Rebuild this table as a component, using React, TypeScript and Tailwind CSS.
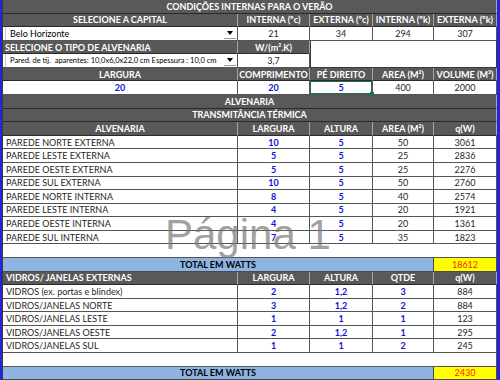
import React from 'react';

const GRID = 'grid grid-cols-[235px_72px_63px_61px_63px] flex-1 min-h-0';
const HEAD =
  'bg-[#595959] text-white font-bold border-r border-b border-r-[#a6a6a6] border-b-[#2a2a2a] flex items-center justify-center whitespace-nowrap overflow-hidden';
const CELL = 'bg-white border-r border-b border-[#555555] flex items-center justify-center whitespace-nowrap overflow-hidden';
const BLUE = 'text-[#1010d8] font-bold';
const DARK = 'text-[#1f1f1f]';

const paredes = [
  ['PAREDE NORTE EXTERNA', '10', '5', '50', '3061'],
  ['PAREDE LESTE EXTERNA', '5', '5', '25', '2836'],
  ['PAREDE OESTE EXTERNA', '5', '5', '25', '2276'],
  ['PAREDE SUL EXTERNA', '10', '5', '50', '2760'],
  ['PAREDE NORTE INTERNA', '8', '5', '40', '2574'],
  ['PAREDE LESTE INTERNA', '4', '5', '20', '1921'],
  ['PAREDE OESTE INTERNA', '4', '5', '20', '1361'],
  ['PAREDE SUL INTERNA', '7', '5', '35', '1823'],
];

const vidros = [
  ['VIDROS (ex. portas e blindex)', '2', '1,2', '3', '884'],
  ['VIDROS/JANELAS NORTE', '3', '1,2', '2', '884'],
  ['VIDROS/JANELAS LESTE', '1', '1', '1', '123'],
  ['VIDROS/JANELAS OESTE', '2', '1,2', '1', '295'],
  ['VIDROS/JANELAS SUL', '1', '1', '2', '245'],
];

function Arrow() {
  return (
    <span className="w-[12px] h-[11px] mr-[1px] shrink-0 flex items-center justify-center border-b border-[#9a9a9a] bg-white">
      <span className="w-0 h-0 border-l-[3px] border-r-[3px] border-t-[4px] border-l-transparent border-r-transparent border-t-black" />
    </span>
  );
}

function Total({ value }: { value: string }) {
  return (
    <div className={GRID}>
      <div className="col-span-4 bg-[#8db4e2] border-r border-b border-[#4a4a4a] flex items-center justify-center font-bold text-black">
        TOTAL EM WATTS
      </div>
      <div className="bg-[#ffff00] border-r border-b border-[#4a4a4a] flex items-center justify-center text-[#ff1a1a]">
        {value}
      </div>
    </div>
  );
}

function DataRow({ row, blueCols }: { row: string[]; blueCols: number[] }) {
  return (
    <div className={GRID}>
      <div className={`${CELL} justify-start pl-[3px] ${DARK}`}>{row[0]}</div>
      {row.slice(1).map((v, i) => (
        <div key={i} className={`${CELL} ${blueCols.includes(i + 1) ? BLUE : DARK}`}>
          {v}
        </div>
      ))}
    </div>
  );
}

export default function App() {
  return (
    <div className="w-[500px] h-[380px] bg-[#2424d8] pl-[2px] pr-[3px] font-['Lato',sans-serif] text-[9px] leading-none">
      <div className="relative h-full flex flex-col border-l border-[#3a3a3a] bg-white">
        <div className={GRID}>
          <div className={`${HEAD} col-span-5 bg-[#555555]`}>CONDIÇÕES INTERNAS PARA O VERÃO</div>
        </div>

        <div className={GRID}>
          <div className={HEAD}>SELECIONE A CAPITAL</div>
          <div className={HEAD}>INTERNA (ºc)</div>
          <div className={HEAD}>EXTERNA (ºc)</div>
          <div className={HEAD}>INTERNA (ºk)</div>
          <div className={HEAD}>EXTERNA (ºk)</div>
        </div>

        <div className={GRID}>
          <div className={`${CELL} justify-between pl-[2px]`}>
            <span className="h-full flex-1 flex items-center pl-[4px] border-l border-[#c8c8c8] text-black">Belo Horizonte</span>
            <Arrow />
          </div>
          <div className={`${CELL} ${DARK}`}>21</div>
          <div className={`${CELL} ${DARK}`}>34</div>
          <div className={`${CELL} ${DARK}`}>294</div>
          <div className={`${CELL} ${DARK}`}>307</div>
        </div>

        <div className={GRID}>
          <div className={`${HEAD} justify-start pl-[2px]`}>SELECIONE O TIPO DE ALVENARIA</div>
          <div className={HEAD}>W/(m².K)</div>
          <div className="col-span-3 bg-white border-r border-l border-[#3a3a3a]" />
        </div>

        <div className={GRID}>
          <div className={`${CELL} justify-between pl-[2px]`}>
            <span className="h-full flex-1 min-w-0 flex items-center pl-[4px] border-l border-[#c8c8c8] text-black text-[7.5px]">
              Pared. de tij.&nbsp; aparentes: 10,0x6,0x22,0 cm Espessura : 10,0 cm
            </span>
            <Arrow />
          </div>
          <div className={`${CELL} ${DARK}`}>3,7</div>
          <div className="col-span-3 bg-white border-r border-b border-l border-[#3a3a3a]" />
        </div>

        <div className={GRID}>
          <div className={HEAD}>LARGURA</div>
          <div className={HEAD}>COMPRIMENTO</div>
          <div className={HEAD}>PÉ DIREITO</div>
          <div className={HEAD}>AREA (M²)</div>
          <div className={HEAD}>VOLUME (M³)</div>
        </div>

        <div className={GRID}>
          <div className={`${CELL} ${BLUE}`}>20</div>
          <div className={`${CELL} ${BLUE}`}>20</div>
          <div className={`${CELL} ${BLUE} relative overflow-visible shadow-[inset_0_0_0_1px_#217346]`}>
            5
            <span className="absolute right-[-2px] bottom-[-2px] w-[4px] h-[4px] bg-[#217346]" />
          </div>
          <div className={`${CELL} ${DARK}`}>400</div>
          <div className={`${CELL} ${DARK}`}>2000</div>
        </div>

        <div className={GRID}>
          <div className={`${HEAD} col-span-5`}>ALVENARIA</div>
        </div>
        <div className={GRID}>
          <div className={`${HEAD} col-span-5`}>TRANSMITÂNCIA TÉRMICA</div>
        </div>

        <div className={GRID}>
          <div className={HEAD}>ALVENARIA</div>
          <div className={HEAD}>LARGURA</div>
          <div className={HEAD}>ALTURA</div>
          <div className={HEAD}>AREA (M²)</div>
          <div className={HEAD}>q(W)</div>
        </div>

        {paredes.map(r => (
          <DataRow key={r[0]} row={r} blueCols={[1, 2]} />
        ))}

        <div className={GRID}>
          <div className={`${CELL} col-span-5`} />
        </div>
        <Total value="18612" />

        <div className={GRID}>
          <div className={`${HEAD} justify-start pl-[3px]`}>VIDROS/ JANELAS EXTERNAS</div>
          <div className={HEAD}>LARGURA</div>
          <div className={HEAD}>ALTURA</div>
          <div className={HEAD}>QTDE</div>
          <div className={HEAD}>q(W)</div>
        </div>

        {vidros.map(r => (
          <DataRow key={r[0]} row={r} blueCols={[1, 2, 3]} />
        ))}

        <div className={GRID}>
          <div className={`${CELL} col-span-5`} />
        </div>
        <Total value="2430" />

        {/* page-break watermark */}
        <div className="absolute left-[162px] top-[214px] pointer-events-none font-['Liberation_Sans',sans-serif] text-[42px] leading-none text-[#777777]/70 whitespace-nowrap">
          Página 1
        </div>
      </div>
    </div>
  );
}
